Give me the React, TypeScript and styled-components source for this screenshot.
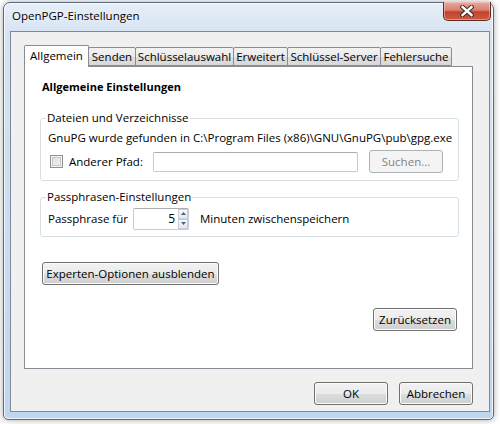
import React from "react";
import styled, { createGlobalStyle } from "styled-components";

const GlobalStyle = createGlobalStyle`
  html, body {
    margin: 0;
    padding: 0;
    background: #ffffff;
  }
  body {
    font-family: "Open Sans", "Noto Sans", sans-serif;
    font-size: 11.5px;
    color: #000;
  }
  * {
    box-sizing: border-box;
  }
`;

// desktop behind the dialog
const Desktop = styled.div`
  width: 500px;
  height: 424px;
  overflow: hidden;
  padding: 2px 0 0 3px;
`;

// Aero glass frame
const Window = styled.div`
  width: 491px;
  height: 418px;
  display: flex;
  flex-direction: column;
  padding: 0 3px 7px 6px;
  border: 1px solid #5a6a7e;
  border-radius: 7px 7px 5px 5px;
  background: linear-gradient(180deg, #e6eef7 0%, #d6e3f2 8%, #c9dcf1 60%, #bfd6f0 100%);
  box-shadow: 0 0 6px rgba(0, 0, 0, 0.35), inset 0 0 0 1px rgba(255, 255, 255, 0.75);
`;

const TitleBar = styled.div`
  height: 28px;
  display: flex;
  align-items: flex-start;
  justify-content: space-between;
`;

const Title = styled.div`
  margin: 5px 0 0 2px;
  line-height: 16px;
  color: #000;
  text-shadow: 0 0 6px rgba(255, 255, 255, 0.9);
`;

const CloseButton = styled.div`
  width: 48px;
  height: 19px;
  margin: -1px -1px 0 0;
  display: flex;
  align-items: center;
  justify-content: center;
  border: 1px solid #5c2a24;
  border-top: none;
  border-radius: 0 0 5px 5px;
  background: linear-gradient(180deg, #e8a99c 0%, #d9806f 45%, #c2422c 55%, #cf5a3f 100%);
  box-shadow: inset 0 0 0 1px rgba(255, 220, 210, 0.45);
`;

const Client = styled.div`
  flex: 1;
  display: flex;
  flex-direction: column;
  background: #f0f0f0;
  border: 1px solid #7d8a9c;
  padding: 13px 16px 6px 13px;
`;

const TabStrip = styled.div`
  height: 21px;
  display: flex;
  align-items: flex-end;
`;

const Tab = styled.div<{ $w: number; $active?: boolean }>`
  position: relative;
  z-index: ${(p) => (p.$active ? 1 : 0)};
  width: ${(p) => p.$w}px;
  height: ${(p) => (p.$active ? 22 : 19)}px;
  margin-left: -1px;
  margin-bottom: ${(p) => (p.$active ? -1 : 0)}px;
  display: flex;
  align-items: center;
  justify-content: center;
  padding-bottom: ${(p) => (p.$active ? 2 : 0)}px;
  border: 1px solid #898c95;
  border-bottom: ${(p) => (p.$active ? "none" : "1px solid #898c95")};
  border-radius: 2px 2px 0 0;
  background: ${(p) =>
    p.$active ? "#ffffff" : "linear-gradient(180deg, #f2f2f2 0%, #ebebeb 50%, #dddddd 51%, #d9d9d9 100%)"};
  white-space: nowrap;
  &:first-child {
    margin-left: 0;
  }
`;

const Panel = styled.div`
  height: 303px;
  display: flex;
  flex-direction: column;
  align-items: stretch;
  background: #fff;
  border: 1px solid #898c95;
  padding: 12px 13px 0 15px;
`;

const Heading = styled.div`
  margin-left: 2px;
  line-height: 16px;
  font-size: 11px;
  font-weight: 700;
`;

const Group = styled.fieldset<{ $top: number; $pt: number; $pb: number }>`
  margin: ${(p) => p.$top}px 0 0;
  padding: ${(p) => p.$pt}px 7px ${(p) => p.$pb}px 7px;
  border: 1px solid #d5dfe5;
  border-radius: 3px;
  min-width: 0;
`;

const Legend = styled.legend`
  margin-left: -2px;
  padding: 0 1px;
  line-height: 16px;
`;

const Line = styled.div`
  line-height: 16px;
  white-space: nowrap;
`;

const Row = styled.div<{ $top?: number }>`
  height: 23px;
  margin-top: ${(p) => p.$top ?? 0}px;
  display: flex;
  align-items: center;
  white-space: nowrap;
`;

const CheckBox = styled.span`
  width: 13px;
  height: 13px;
  margin-left: 2px;
  border: 1px solid #8e8f8f;
  background: linear-gradient(135deg, #dcdcdc 0%, #f4f4f4 100%);
  box-shadow: inset 0 0 0 1px #f4f4f4, inset 0 0 0 2px #c8c8c8;
`;

const FieldLabel = styled.span<{ $w: number; $gap?: number }>`
  width: ${(p) => p.$w}px;
  margin-left: ${(p) => p.$gap ?? 0}px;
`;

const TextBox = styled.div`
  width: 205px;
  height: 20px;
  border: 1px solid #c6cad1;
  border-top-color: #abadb3;
  border-radius: 2px;
  background: #fff;
`;

const Button = styled.div<{ $w: number; $disabled?: boolean }>`
  width: ${(p) => p.$w}px;
  height: 23px;
  display: flex;
  align-items: center;
  justify-content: center;
  flex: none;
  border: 1px solid ${(p) => (p.$disabled ? "#adb2b5" : "#707070")};
  border-radius: 3px;
  color: ${(p) => (p.$disabled ? "#838383" : "#000")};
  background: ${(p) =>
    p.$disabled
      ? "#f4f4f4"
      : "linear-gradient(180deg, #f2f2f2 0%, #ebebeb 50%, #dddddd 51%, #cfcfcf 100%)"};
  box-shadow: inset 0 0 0 1px ${(p) => (p.$disabled ? "#f4f4f4" : "#fcfcfc")};
  white-space: nowrap;
`;

const SearchButton = styled(Button)`
  margin-left: 11px;
`;

const Spinner = styled.div`
  width: 56px;
  height: 22px;
  display: flex;
  align-items: stretch;
  border: 1px solid #c6cad1;
  border-top-color: #abadb3;
  border-radius: 2px;
  background: #fff;
`;

const SpinValue = styled.div`
  flex: 1;
  display: flex;
  align-items: center;
  justify-content: flex-end;
  padding-right: 3px;
  font-size: 12px;
`;

const SpinButtons = styled.div`
  width: 10px;
  display: flex;
  flex-direction: column;
`;

const SpinButton = styled.div`
  flex: 1;
  display: flex;
  align-items: center;
  justify-content: center;
  border: 1px solid #c5cfdc;
  background: linear-gradient(180deg, #f6f8fb 0%, #e4e9f0 100%);
`;

const After = styled.span`
  margin-left: 11px;
`;

const ExpertButton = styled(Button)`
  margin: 25px 0 0 2px;
`;

const ResetButton = styled(Button)`
  margin: 23px 2px 0 0;
  align-self: flex-end;
`;

const Footer = styled.div`
  margin-top: 13px;
  display: flex;
  justify-content: flex-end;
  gap: 11px;
`;

const tabs = [
  { label: "Allgemein", w: 65, active: true },
  { label: "Senden", w: 48 },
  { label: "Schlüsselauswahl", w: 99 },
  { label: "Erweitert", w: 55 },
  { label: "Schlüssel-Server", w: 94 },
  { label: "Fehlersuche", w: 72 },
];

const Arrow = ({ up }: { up?: boolean }) => (
  <svg width="5" height="3" viewBox="0 0 5 3">
    <path d={up ? "M0 3 L2.5 0 L5 3 Z" : "M0 0 L2.5 3 L5 0 Z"} fill="#4d6185" />
  </svg>
);

export default function App() {
  return (
    <>
      <GlobalStyle />
      <Desktop>
        <Window>
          <TitleBar>
            <Title>OpenPGP-Einstellungen</Title>
            <CloseButton>
              <svg width="14" height="12" viewBox="0 0 14 12">
                <path d="M2.5 2 L11.5 10 M11.5 2 L2.5 10" stroke="#3a2a2a" strokeWidth="4.4" strokeLinecap="square" />
                <path d="M2.5 2 L11.5 10 M11.5 2 L2.5 10" stroke="#ffffff" strokeWidth="2.4" strokeLinecap="square" />
              </svg>
            </CloseButton>
          </TitleBar>
          <Client>
            <TabStrip>
              {tabs.map((t) => (
                <Tab key={t.label} $w={t.w} $active={t.active}>
                  {t.label}
                </Tab>
              ))}
            </TabStrip>
            <Panel>
              <Heading>Allgemeine Einstellungen</Heading>
              <Group $top={15} $pt={4} $pb={7}>
                <Legend>Dateien und Verzeichnisse</Legend>
                <Line>GnuPG wurde gefunden in C:\Program Files (x86)\GNU\GnuPG\pub\gpg.exe</Line>
                <Row $top={4}>
                  <CheckBox />
                  <FieldLabel $w={84} $gap={6}>Anderer Pfad:</FieldLabel>
                  <TextBox />
                  <SearchButton $w={74} $disabled>
                    Suchen...
                  </SearchButton>
                </Row>
              </Group>
              <Group $top={8} $pt={2} $pb={6}>
                <Legend>Passphrasen-Einstellungen</Legend>
                <Row>
                  <FieldLabel $w={85}>Passphrase für</FieldLabel>
                  <Spinner>
                    <SpinValue>5</SpinValue>
                    <SpinButtons>
                      <SpinButton>
                        <Arrow up />
                      </SpinButton>
                      <SpinButton>
                        <Arrow />
                      </SpinButton>
                    </SpinButtons>
                  </Spinner>
                  <After>Minuten zwischenspeichern</After>
                </Row>
              </Group>
              <ExpertButton $w={177}>Experten-Optionen ausblenden</ExpertButton>
              <ResetButton $w={84}>Zurücksetzen</ResetButton>
            </Panel>
            <Footer>
              <Button $w={74}>OK</Button>
              <Button $w={74}>Abbrechen</Button>
            </Footer>
          </Client>
        </Window>
      </Desktop>
    </>
  );
}
